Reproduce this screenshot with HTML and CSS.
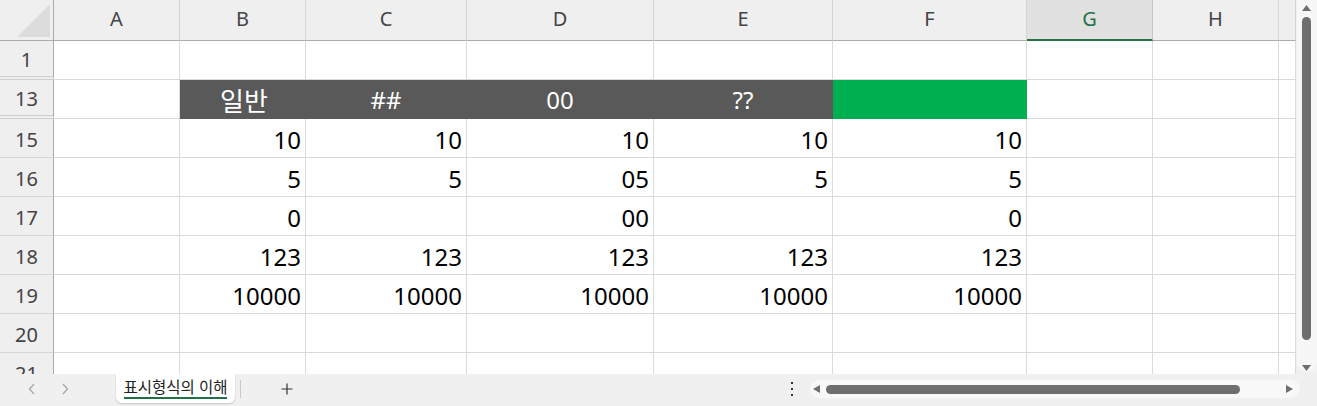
FILE: index.html
```html
<!DOCTYPE html>
<html lang="ko">
<head>
<meta charset="utf-8">
<title>표시형식의 이해</title>
<link rel="stylesheet" href="styles.css">
</head>
<body>
<div class="app">
  <div class="main">
    <div class="sheet">
      <!-- column headers -->
      <div class="c corner"><svg width="33" height="33" viewBox="0 0 33 33"><polygon points="33,0 33,33 0,33" fill="#dcdcdc"/></svg></div>
      <div class="c ch">A</div>
      <div class="c ch">B</div>
      <div class="c ch">C</div>
      <div class="c ch">D</div>
      <div class="c ch">E</div>
      <div class="c ch">F</div>
      <div class="c ch sel">G</div>
      <div class="c ch">H</div>
      <div class="c ch"></div>

      <!-- row 1 -->
      <div class="c rh hid">1</div>
      <div class="c"></div><div class="c"></div><div class="c"></div><div class="c"></div><div class="c"></div><div class="c"></div><div class="c"></div><div class="c"></div><div class="c"></div>

      <!-- row 13 -->
      <div class="c rh hid">13</div>
      <div class="c"></div>
      <div class="c dk ko">일반</div>
      <div class="c dk">##</div>
      <div class="c dk">00</div>
      <div class="c dk">??</div>
      <div class="c gr"></div>
      <div class="c"></div><div class="c"></div><div class="c"></div>

      <!-- row 15 -->
      <div class="c rh">15</div>
      <div class="c"></div>
      <div class="c">10</div><div class="c">10</div><div class="c">10</div><div class="c">10</div><div class="c">10</div>
      <div class="c"></div><div class="c"></div><div class="c"></div>

      <!-- row 16 -->
      <div class="c rh">16</div>
      <div class="c"></div>
      <div class="c">5</div><div class="c">5</div><div class="c">05</div><div class="c">5</div><div class="c">5</div>
      <div class="c"></div><div class="c"></div><div class="c"></div>

      <!-- row 17 -->
      <div class="c rh">17</div>
      <div class="c"></div>
      <div class="c">0</div><div class="c"></div><div class="c">00</div><div class="c"></div><div class="c">0</div>
      <div class="c"></div><div class="c"></div><div class="c"></div>

      <!-- row 18 -->
      <div class="c rh">18</div>
      <div class="c"></div>
      <div class="c">123</div><div class="c">123</div><div class="c">123</div><div class="c">123</div><div class="c">123</div>
      <div class="c"></div><div class="c"></div><div class="c"></div>

      <!-- row 19 -->
      <div class="c rh">19</div>
      <div class="c"></div>
      <div class="c">10000</div><div class="c">10000</div><div class="c">10000</div><div class="c">10000</div><div class="c">10000</div>
      <div class="c"></div><div class="c"></div><div class="c"></div>

      <!-- row 20 -->
      <div class="c rh">20</div>
      <div class="c"></div><div class="c"></div><div class="c"></div><div class="c"></div><div class="c"></div><div class="c"></div><div class="c"></div><div class="c"></div><div class="c"></div>

      <!-- row 21 -->
      <div class="c rh">21</div>
      <div class="c"></div><div class="c"></div><div class="c"></div><div class="c"></div><div class="c"></div><div class="c"></div><div class="c"></div><div class="c"></div><div class="c"></div>
    </div>

    <div class="vscroll">
      <div class="vtrack">
        <svg class="varrow" width="9" height="6" viewBox="0 0 9 6"><polygon points="4.5,0 9,6 0,6" fill="#6e6e6e"/></svg>
        <div class="vthumb"></div>
        <svg class="varrow down" width="9" height="6" viewBox="0 0 9 6"><polygon points="0,0 9,0 4.5,6" fill="#6e6e6e"/></svg>
      </div>
    </div>
  </div>

  <div class="bar">
    <div class="nav">
      <svg width="8" height="12" viewBox="0 0 8 12"><polyline points="6,1 1.5,6 6,11" fill="none" stroke="#a8a8a8" stroke-width="1.3"/></svg>
      <svg width="8" height="12" viewBox="0 0 8 12"><polyline points="2,1 6.5,6 2,11" fill="none" stroke="#a8a8a8" stroke-width="1.3"/></svg>
    </div>
    <div class="tab"><span class="tabtext">표시형식의 이해</span><span class="tabline"></span></div>
    <div class="sep"></div>
    <svg class="add" width="12" height="12" viewBox="0 0 12 12"><path d="M6 0.5V11.5M0.5 6H11.5" stroke="#333" stroke-width="1.2" fill="none"/></svg>
    <div class="right">
      <svg class="dots" width="4" height="14" viewBox="0 0 4 14"><rect x="1" y="0" width="2" height="2" fill="#333"/><rect x="1" y="6" width="2" height="2" fill="#333"/><rect x="1" y="12" width="2" height="2" fill="#333"/></svg>
      <div class="htrack">
        <svg width="7" height="8" viewBox="0 0 7 8"><polygon points="0,4 7,0 7,8" fill="#6e6e6e"/></svg>
        <div class="hthumb"></div>
        <svg class="hright" width="7" height="8" viewBox="0 0 7 8"><polygon points="0,0 7,4 0,8" fill="#6e6e6e"/></svg>
      </div>
    </div>
  </div>
</div>
</body>
</html>
```

FILE: styles.css
```css
* {
  box-sizing: border-box;
  margin: 0;
  padding: 0;
}

body {
  width: 1317px;
  height: 406px;
  overflow: hidden;
  background: #f0f0f0;
  font-family: "Noto Sans", "Noto Sans CJK KR", sans-serif;
}

.app {
  display: flex;
  flex-direction: column;
  height: 406px;
}

.main {
  display: flex;
  height: 374px;
  overflow: hidden;
}

.sheet {
  display: grid;
  grid-template-columns: 54px 126px 126px 161px 187px 179px 194px 126px 126px 17px;
  grid-template-rows: 41px repeat(9, 39px);
  width: 1296px;
  height: 374px;
  overflow: hidden;
  background: #fff;
}

.c {
  border-right: 1px solid #dadada;
  border-bottom: 1px solid #dadada;
  display: flex;
  align-items: center;
  justify-content: flex-end;
  padding: 2px 4px 0 0;
  font-size: 24px;
  color: #000;
  white-space: nowrap;
  overflow: hidden;
}

.corner {
  background: #efefef;
  border-bottom-color: #ababab;
  border-right-color: #ababab;
  align-items: flex-end;
  padding: 0 3px 3px 0;
}

.ch {
  background: #efefef;
  border-right-color: #d6d6d6;
  border-bottom-color: #ababab;
  justify-content: center;
  font-size: 20px;
  color: #444;
  padding: 0 0 3px 0;
}

.ch.sel {
  background: #e1e1e1;
  color: #217346;
  border-bottom: 2px solid #217346;
  border-right-color: #c6c6c6;
}

.rh {
  background: #efefef;
  border-right-color: #ababab;
  border-bottom-color: #d6d6d6;
  justify-content: center;
  font-size: 20px;
  color: #444;
  padding: 2px 0 0 0;
}

.rh.hid {
  border-bottom: 4px double #cfcfcf;
}

.dk {
  background: #595959;
  border-color: #595959;
  color: #fff;
  justify-content: center;
  padding: 0;
}

.ko {
  font-family: "Noto Sans CJK KR", "Noto Sans", sans-serif;
  font-size: 26px;
  padding-left: 3px;
}

.gr {
  background: #00b050;
  border-color: #00b050;
}

/* vertical scrollbar */
.vscroll {
  width: 21px;
  background: #f0f0f0;
  padding-left: 1px;
}

.vtrack {
  height: 372px;
  background: #f7f7f7;
  border-radius: 0 0 10px 10px;
  display: flex;
  flex-direction: column;
  align-items: center;
  padding-top: 5px;
  padding-right: 1px;
}

.vthumb {
  width: 9px;
  height: 323px;
  margin-top: 6px;
  background: #6e6e6e;
  border-radius: 5px;
}

.varrow.down {
  margin-top: 25px;
}

/* bottom bar */
.bar {
  height: 32px;
  display: flex;
  align-items: flex-start;
  background: #f0f0f0;
}

.nav {
  width: 116px;
  height: 30px;
  display: flex;
  align-items: center;
  padding-left: 28px;
  gap: 25px;
}

.tab {
  width: 119px;
  height: 29px;
  background: #fff;
  border-radius: 0 0 6px 6px;
  box-shadow: 0 1px 2px rgba(0, 0, 0, 0.18);
  display: flex;
  flex-direction: column;
  align-items: center;
  padding-top: 2px;
}

.tabtext {
  font-family: "Noto Sans CJK KR", "Noto Sans", sans-serif;
  font-size: 15.5px;
  line-height: 20px;
  color: #222;
}

.tabline {
  width: 103px;
  height: 2px;
  margin-top: 1px;
  background: #1e7145;
}

.sep {
  width: 1px;
  height: 18px;
  margin: 6px 0 0 5px;
  background: #c8c8c8;
}

.add {
  margin: 9px 0 0 40px;
}

.right {
  margin-left: auto;
  display: flex;
  align-items: center;
  gap: 16px;
  padding-right: 17px;
  height: 30px;
}

.htrack {
  width: 490px;
  height: 18px;
  background: #f8f8f8;
  border-radius: 9px;
  display: flex;
  align-items: center;
  padding: 0 7px 0 3px;
}

.hthumb {
  width: 414px;
  height: 9px;
  margin-left: 6px;
  background: #6e6e6e;
  border-radius: 5px;
}

.hright {
  margin-left: auto;
}
```
